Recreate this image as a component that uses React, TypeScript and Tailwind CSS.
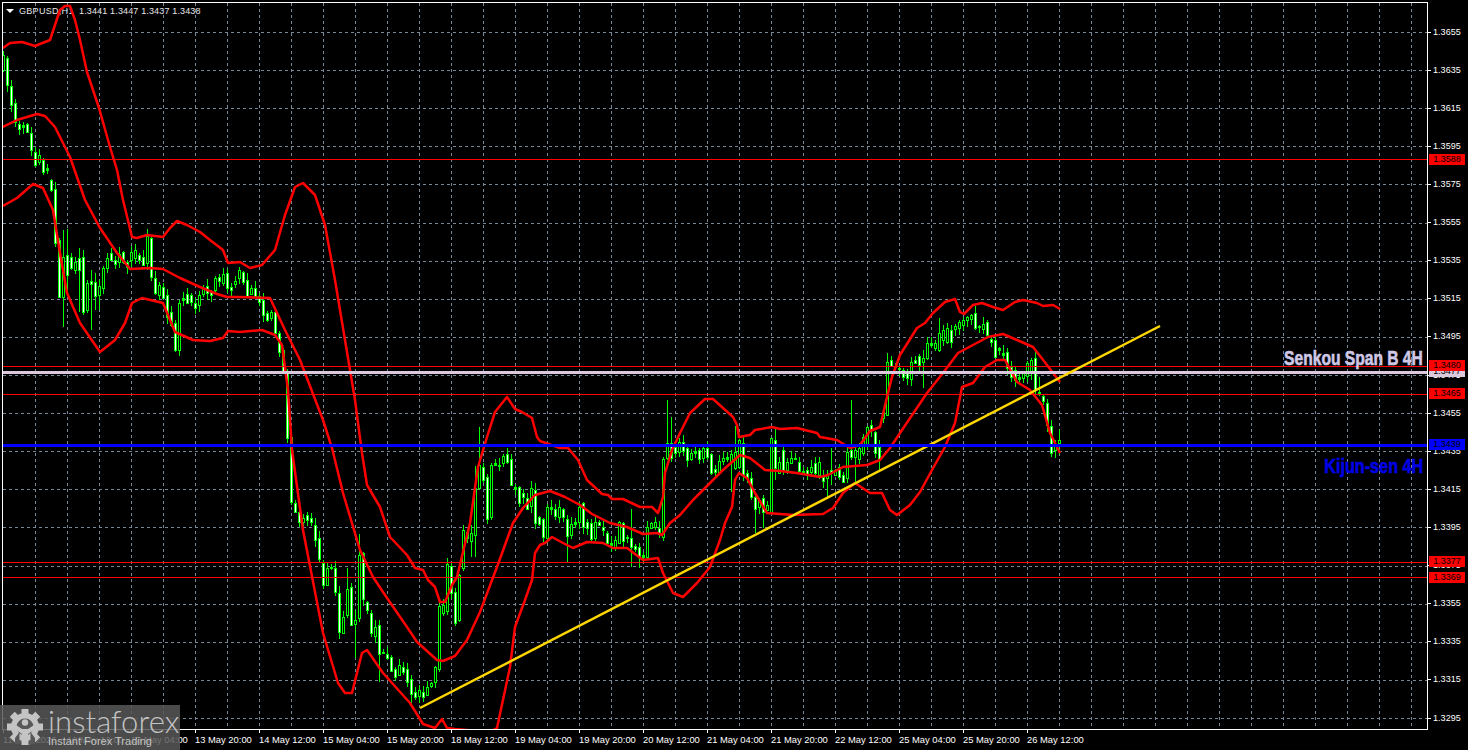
const font = "font-['Liberation_Sans',Arial,sans-serif]";

// band traces, page px
const upper = [[3,48],[10,43],[22,42],[35,46],[50,40],[55,25],[60,10],[65,6],[70,6],[75,20],[80,40],[87,72],[99,108],[110,147],[117,170],[123,200],[132,237],[137,238],[147,235],[163,237],[170,228],[177,221],[187,225],[200,232],[210,240],[223,250],[228,263],[240,262],[250,268],[262,265],[275,250],[285,215],[295,187],[303,183],[315,195],[325,225],[335,280],[345,340],[355,400],[362,453],[367,485],[380,507],[390,537],[407,555],[415,568],[423,570],[428,580],[435,587],[440,602],[445,602],[452,585],[457,577],[470,523],[478,467],[487,437],[495,412],[507,397],[515,409],[522,412],[532,418],[537,437],[540,441],[560,448],[568,448],[578,460],[587,480],[602,494],[608,495],[612,499],[623,499],[640,507],[652,507],[658,513],[663,497],[665,473],[672,450],[680,433],[690,413],[705,399],[713,399],[723,408],[733,417],[737,425],[739,437],[750,435],[755,430],[772,427],[780,429],[797,428],[817,433],[820,437],[837,440],[845,445],[850,448],[860,445],[870,431],[880,427],[887,397],[892,377],[900,355],[917,328],[925,323],[933,313],[945,302],[955,299],[960,312],[964,314],[973,305],[982,303],[993,307],[1003,310],[1015,302],[1023,300],[1037,303],[1043,306],[1053,305],[1060,309]];
const middle = [[3,127],[17,120],[37,114],[45,116],[55,127],[70,157],[85,200],[100,228],[117,253],[130,269],[150,268],[163,269],[180,278],[200,287],[217,294],[227,297],[240,297],[270,298],[285,330],[300,360],[323,420],[332,448],[343,493],[360,550],[373,577],[387,598],[407,627],[417,642],[437,660],[443,661],[455,656],[467,640],[480,612],[497,567],[513,523],[523,508],[535,495],[550,491],[565,497],[580,505],[592,514],[610,523],[627,527],[643,534],[657,533],[662,535],[670,523],[680,515],[693,500],[710,483],[723,470],[740,455],[750,458],[765,470],[780,471],[797,473],[820,477],[828,475],[843,467],[867,465],[880,460],[890,448],[900,433],[927,393],[943,373],[958,353],[973,345],[988,337],[1003,334],[1017,340],[1033,347],[1047,365],[1060,382]];
const lower = [[3,206],[17,198],[33,184],[43,188],[53,210],[60,253],[67,293],[80,323],[100,352],[115,340],[125,323],[132,303],[142,298],[163,303],[175,332],[193,340],[210,341],[223,338],[228,331],[240,332],[262,330],[275,335],[282,345],[288,390],[292,450],[303,530],[323,633],[338,683],[345,693],[352,693],[362,653],[367,650],[383,673],[410,703],[423,724],[435,728],[442,719],[447,728],[455,729],[490,732],[497,728],[510,667],[515,627],[525,600],[532,580],[535,553],[540,545],[545,543],[552,537],[563,543],[573,548],[587,542],[603,543],[613,548],[627,548],[643,560],[658,558],[663,573],[673,593],[683,597],[697,583],[710,567],[720,540],[725,523],[732,507],[735,480],[739,473],[747,478],[755,493],[767,513],[793,515],[823,514],[833,508],[843,493],[855,483],[870,493],[882,493],[890,510],[897,515],[910,505],[920,492],[932,470],[945,447],[955,423],[962,387],[973,383],[985,367],[997,360],[1005,360],[1017,382],[1030,390],[1042,405],[1050,433],[1060,453]];

// x, open y, close y
const candles = [[3,70,55],[7,58,85],[11,86,105],[15,103,122],[19,124,129],[23,127,125],[27,124,132],[31,133,150],[35,152,165],[39,162,155],[43,160,172],[47,170,168],[51,180,190],[55,189,243],[59,240,297],[63,297,257],[67,255,275],[71,257,268],[75,270,262],[79,258,270],[83,257,312],[87,310,283],[91,281,284],[95,282,296],[99,295,286],[103,288,268],[107,268,258],[111,253,260],[115,260,264],[119,262,254],[123,252,262],[127,262,267],[131,260,252],[135,258,250],[139,255,260],[143,257,265],[147,263,236],[151,238,277],[155,278,293],[159,295,285],[163,287,298],[167,295,317],[171,312,325],[175,323,350],[179,350,303],[183,300,298],[187,294,303],[191,295,302],[195,303,308],[199,305,295],[203,294,288],[207,286,293],[211,292,295],[215,290,278],[219,277,281],[223,283,274],[227,273,288],[231,287,290],[235,284,281],[239,278,270],[243,272,282],[247,280,296],[251,294,288],[255,288,296],[259,296,302],[263,300,315],[267,313,320],[271,318,312],[275,312,333],[279,333,352],[283,350,372],[287,372,438],[291,437,502],[295,503,512],[299,512,522],[303,522,518],[307,515,520],[311,518,522],[315,525,540],[319,538,559],[323,563,585],[327,585,568],[331,567,568],[335,568,592],[339,593,632],[343,633,617],[347,615,589],[351,587,625],[355,624,620],[359,618,555],[363,553,599],[367,602,610],[371,613,633],[375,636,627],[379,625,654],[383,652,653],[387,654,658],[391,657,671],[395,669,677],[399,675,665],[403,667,672],[407,669,682],[411,679,694],[415,692,697],[419,696,690],[423,692,697],[427,695,687],[431,686,683],[435,682,667],[439,669,606],[443,613,605],[447,611,564],[451,566,593],[455,592,623],[459,620,575],[463,568,530],[467,532,538],[471,541,533],[475,535,488],[479,488,465],[483,467,480],[487,477,519],[491,517,465],[495,463,465],[499,465,466],[503,463,456],[507,454,462],[511,459,485],[515,487,489],[519,487,503],[523,493,497],[527,498,509],[531,506,488],[535,490,523],[539,517,524],[543,519,537],[547,538,507],[551,507,509],[555,509,516],[559,517,507],[563,509,517],[567,519,536],[571,535,524],[575,522,524],[579,522,507],[583,503,527],[587,522,528],[591,523,539],[595,538,522],[599,522,525],[603,527,530],[607,533,543],[611,543,545],[615,547,540],[619,543,522],[623,523,541],[627,537,538],[631,538,547],[635,546,549],[639,547,556],[643,555,557],[647,557,527],[651,528,523],[655,527,522],[659,528,534],[663,537,459],[667,458,443],[671,443,458],[675,447,453],[679,452,442],[683,442,451],[687,448,460],[691,459,453],[695,451,453],[699,450,459],[703,458,448],[707,448,457],[711,454,473],[715,469,472],[719,472,461],[723,461,458],[727,459,457],[731,462,454],[735,468,452],[739,467,440],[743,443,475],[747,473,478],[751,478,497],[755,497,509],[759,507,500],[763,498,512],[767,510,505],[771,513,438],[775,440,468],[779,473,462],[783,450,470],[787,470,462],[791,463,458],[795,458,459],[799,462,471],[803,471,473],[807,470,475],[811,472,467],[815,463,473],[819,475,462],[823,477,481],[827,478,475],[831,470,473],[835,475,470],[839,467,477],[843,475,482],[847,478,452],[851,450,457],[855,457,450],[859,459,448],[863,453,437],[867,444,427],[871,425,430],[875,432,453],[879,447,460],[883,418,412],[887,415,362],[891,360,366],[895,366,367],[899,368,369],[903,370,377],[907,373,378],[911,379,362],[915,360,363],[919,356,365],[923,362,358],[927,358,343],[931,343,345],[935,348,343],[939,350,333],[943,340,330],[947,342,328],[951,330,342],[955,329,326],[959,328,322],[963,325,320],[967,320,317],[971,319,315],[975,313,328],[979,326,327],[983,329,324],[987,322,335],[991,339,342],[995,340,357],[999,350,348],[1003,353,355],[1007,352,368],[1011,367,377],[1015,370,380],[1019,379,377],[1023,378,372],[1027,376,363],[1031,373,360],[1035,358,390],[1039,392,394],[1043,396,401],[1047,403,425],[1051,426,453],[1055,450,445],[1059,443,440]];

// long wicks that stand out, x -> [high, low]
const wicks: Record<number, number[]> = {
  63: [230, 327], 67: [229, 292], 79: [248, 312], 83: [250, 315], 91: [270, 330], 95: [273, 310], 99: [280, 310], 175: [320, 352],
  347: [568, 618], 355: [610, 658], 359: [534, 622], 379: [620, 682], 411: [675, 703], 471: [525, 557], 475: [466, 557], 479: [427, 490],
  567: [515, 563], 631: [509, 567], 639: [543, 568], 667: [400, 460], 671: [417, 462], 731: [450, 492], 735: [426, 470], 755: [495, 533],
  763: [495, 528], 771: [438, 513], 775: [428, 480], 823: [470, 488], 827: [470, 497], 831: [448, 485], 851: [400, 460], 855: [445, 483],
  879: [440, 470], 887: [353, 415], 923: [350, 388], 939: [318, 352], 1003: [345, 360], 1035: [350, 395], 1039: [377, 396], 1051: [420, 457], 1055: [440, 458], 1059: [429, 455],
};

const prices = ["1.3655","1.3635","1.3615","1.3595","1.3575","1.3555","1.3535","1.3515","1.3495","1.3475","1.3455","1.3435","1.3415","1.3395","1.3375","1.3355","1.3335","1.3315","1.3295"];
const times = ["11 May 2026","12 May 12:00","13 May 04:00","13 May 20:00","14 May 12:00","15 May 04:00","15 May 20:00","18 May 12:00","19 May 04:00","19 May 20:00","20 May 12:00","21 May 04:00","21 May 20:00","22 May 12:00","25 May 04:00","25 May 20:00","26 May 12:00"];

const rand = (n: number) => {
  const s = Math.sin(n * 12.9898) * 43758.5453;
  return s - Math.floor(s);
};

const pts = (list: number[][]) => list.map((p) => p.join(",")).join(" ");

function Candle({ c }: { c: number[] }) {
  const [x, open, close] = c;
  const top = Math.min(open, close);
  const bottom = Math.max(open, close);
  const w = wicks[x];
  const high = w ? w[0] : top - 1 - Math.floor(rand(x) * 7);
  const low = w ? w[1] : bottom + 1 + Math.floor(rand(x + 0.5) * 7);
  const h = Math.max(bottom - top, 1);
  return (
    <g>
      <rect x={x} y={high} width={1} height={low - high} fill="#00ff00" />
      <rect x={x - 1} y={top} width={3} height={h + 1} fill="#00ff00" />
      {h > 2 && <rect x={x} y={top + 1} width={1} height={h - 1} fill={close > open ? "#ffffff" : "#000000"} />}
    </g>
  );
}

function Chart() {
  const gridY = prices.map((_, i) => Math.round(32 + i * 38.11));
  const gridX = Array.from({ length: 44 }, (_, i) => 35 + i * 32);
  return (
    <svg className="absolute inset-0 block" width={1424} height={726} viewBox="3 3 1424 726">
      <g shapeRendering="crispEdges" stroke="#778899" strokeWidth={1} strokeDasharray="3 3">
        {gridY.map((y) => <line key={y} x1={3} x2={1427} y1={y + 0.5} y2={y + 0.5} />)}
        {gridX.map((x) => <line key={x} x1={x + 0.5} x2={x + 0.5} y1={3} y2={729} />)}
      </g>
      <g shapeRendering="crispEdges">
        {candles.map((c) => <Candle key={c[0]} c={c} />)}
      </g>
      <g fill="none" stroke="#ff0000" strokeWidth={2.5} strokeLinejoin="round">
        <polyline points={pts(upper)} />
        <polyline points={pts(middle)} />
        <polyline points={pts(lower)} />
      </g>
      <g shapeRendering="crispEdges" fill="#ff0000">
        <rect x={3} y={159} width={1424} height={1} />
        <rect x={3} y={366} width={1424} height={1} />
        <rect x={3} y={394} width={1424} height={1} />
        <rect x={3} y={562} width={1424} height={1} />
        <rect x={3} y={577} width={1424} height={1} />
        <rect x={3} y={371} width={1424} height={3} fill="#dcc8dc" />
      </g>
      <line x1={420} y1={708} x2={1160} y2={326} stroke="#ffd700" strokeWidth={2.5} />
      <rect x={3} y={444} width={1424} height={3} fill="#0000ff" shapeRendering="crispEdges" />
    </svg>
  );
}

function PriceAxis() {
  return (
    <div className="relative flex-1 pt-[11px] overflow-hidden">
      {prices.map((p) => (
        <div key={p} className="flex h-[38.11px] items-center">
          <span className="h-px w-[3px] bg-white" />
          <span className="ml-[2px] text-[9px] leading-none tracking-[0.05px] text-white">{p}</span>
        </div>
      ))}
      <Badge className="top-[152px] bg-[#ff0000]" label="1.3588" />
      <Badge className="top-[364px] bg-[#dcc8dc]" label="1.3477" />
      <Badge className="top-[358px] bg-[#ff0000]" label="1.3480" />
      <Badge className="top-[386px] bg-[#ff0000]" label="1.3465" />
      <Badge className="top-[437px] bg-[#0000ff]" label="1.3439" />
      <Badge className="top-[554px] bg-[#ff0000]" label="1.3377" />
      <Badge className="top-[570px] bg-[#ff0000]" label="1.3369" />
    </div>
  );
}

function Badge({ className, label }: { className: string; label: string }) {
  return (
    <div className={`absolute left-[1px] flex h-[11px] w-[36px] items-center justify-center text-[9px] leading-none text-black ${className}`}>
      {label}
    </div>
  );
}

function TimeAxis() {
  return (
    <div className="flex h-[20px] pl-px">
      {times.map((t) => (
        <div key={t} className="flex w-[64px] flex-col items-start">
          <span className="h-[3px] w-px bg-white" />
          <span className="mt-[1px] text-[9.4px] leading-[12px] whitespace-nowrap text-white">{t}</span>
        </div>
      ))}
    </div>
  );
}

function Gear() {
  const teeth = [0, 45, 90, 135, 180, 225, 270, 315];
  return (
    <svg width={36} height={38} viewBox="0 0 36 38" className="shrink-0">
      {teeth.map((a) => (
        <rect key={a} x={14.5} y={1} width={7} height={8} fill="#c4c4c4" transform={`rotate(${a} 18 19)`} />
      ))}
      <circle cx={18} cy={19} r={14} fill="#c4c4c4" />
      <circle cx={18} cy={19} r={8.5} fill="#585858" />
      <circle cx={18} cy={14.5} r={3.2} fill="#c4c4c4" />
      <path d="M9 17 L15 21 H21 L27 17 V22 L21 26 V36 H15 V26 L9 22 Z" fill="#c4c4c4" />
      <path d="M8 30 L12.5 24 V36 H8 Z M28 30 L23.5 24 V36 H28 Z" fill="#585858" />
    </svg>
  );
}

function Watermark() {
  return (
    <div className="absolute bottom-0 left-0 flex h-[45px] w-[180px] items-start gap-[5px] bg-[#585858]/85 pl-[7px] pt-[3px]">
      <Gear />
      <div className="flex flex-col text-[#c4c4c4]">
        <span className="font-['Lato',sans-serif] text-[31px] font-light leading-[27px] tracking-[0.1px] whitespace-nowrap">instaforex</span>
        <span className={`${font} text-[11px] leading-[12px]`}>Instant Forex Trading</span>
      </div>
    </div>
  );
}

export default function App() {
  return (
    <div className={`${font} relative flex h-[750px] w-[1468px] flex-col overflow-hidden bg-black pl-[2px] pt-[2px]`}>
      <div className="flex h-[728px]">
        <div className="relative h-full w-[1426px] shrink-0 border border-white">
          <div className="absolute left-[3px] top-[2px] flex items-center text-[9px] leading-[12px] text-[#e8e8e8]">
            <span className="mr-[5px] h-0 w-0 border-x-[4px] border-t-[4px] border-x-transparent border-t-white" />
            <span className="w-[60px] tracking-[0.3px]">GBPUSD,H1</span>
            <span className="tracking-[0.15px]">1.3441 1.3447 1.3437 1.3438</span>
          </div>
          <Chart />
          <div className="absolute right-[4px] top-[344px] origin-right scale-x-[0.78] text-[20px] font-bold leading-[22px] whitespace-nowrap text-[#cfc8e6] [-webkit-text-stroke:0.6px_#cfc8e6]">
            Senkou Span B 4H
          </div>
          <div className="absolute right-[4px] top-[452px] origin-right scale-x-[0.81] text-[20px] font-bold leading-[22px] whitespace-nowrap text-[#0000e6] [-webkit-text-stroke:0.6px_#0000e6]">
            Kijun-sen 4H
          </div>
        </div>
        <PriceAxis />
      </div>
      <TimeAxis />
      <Watermark />
    </div>
  );
}
